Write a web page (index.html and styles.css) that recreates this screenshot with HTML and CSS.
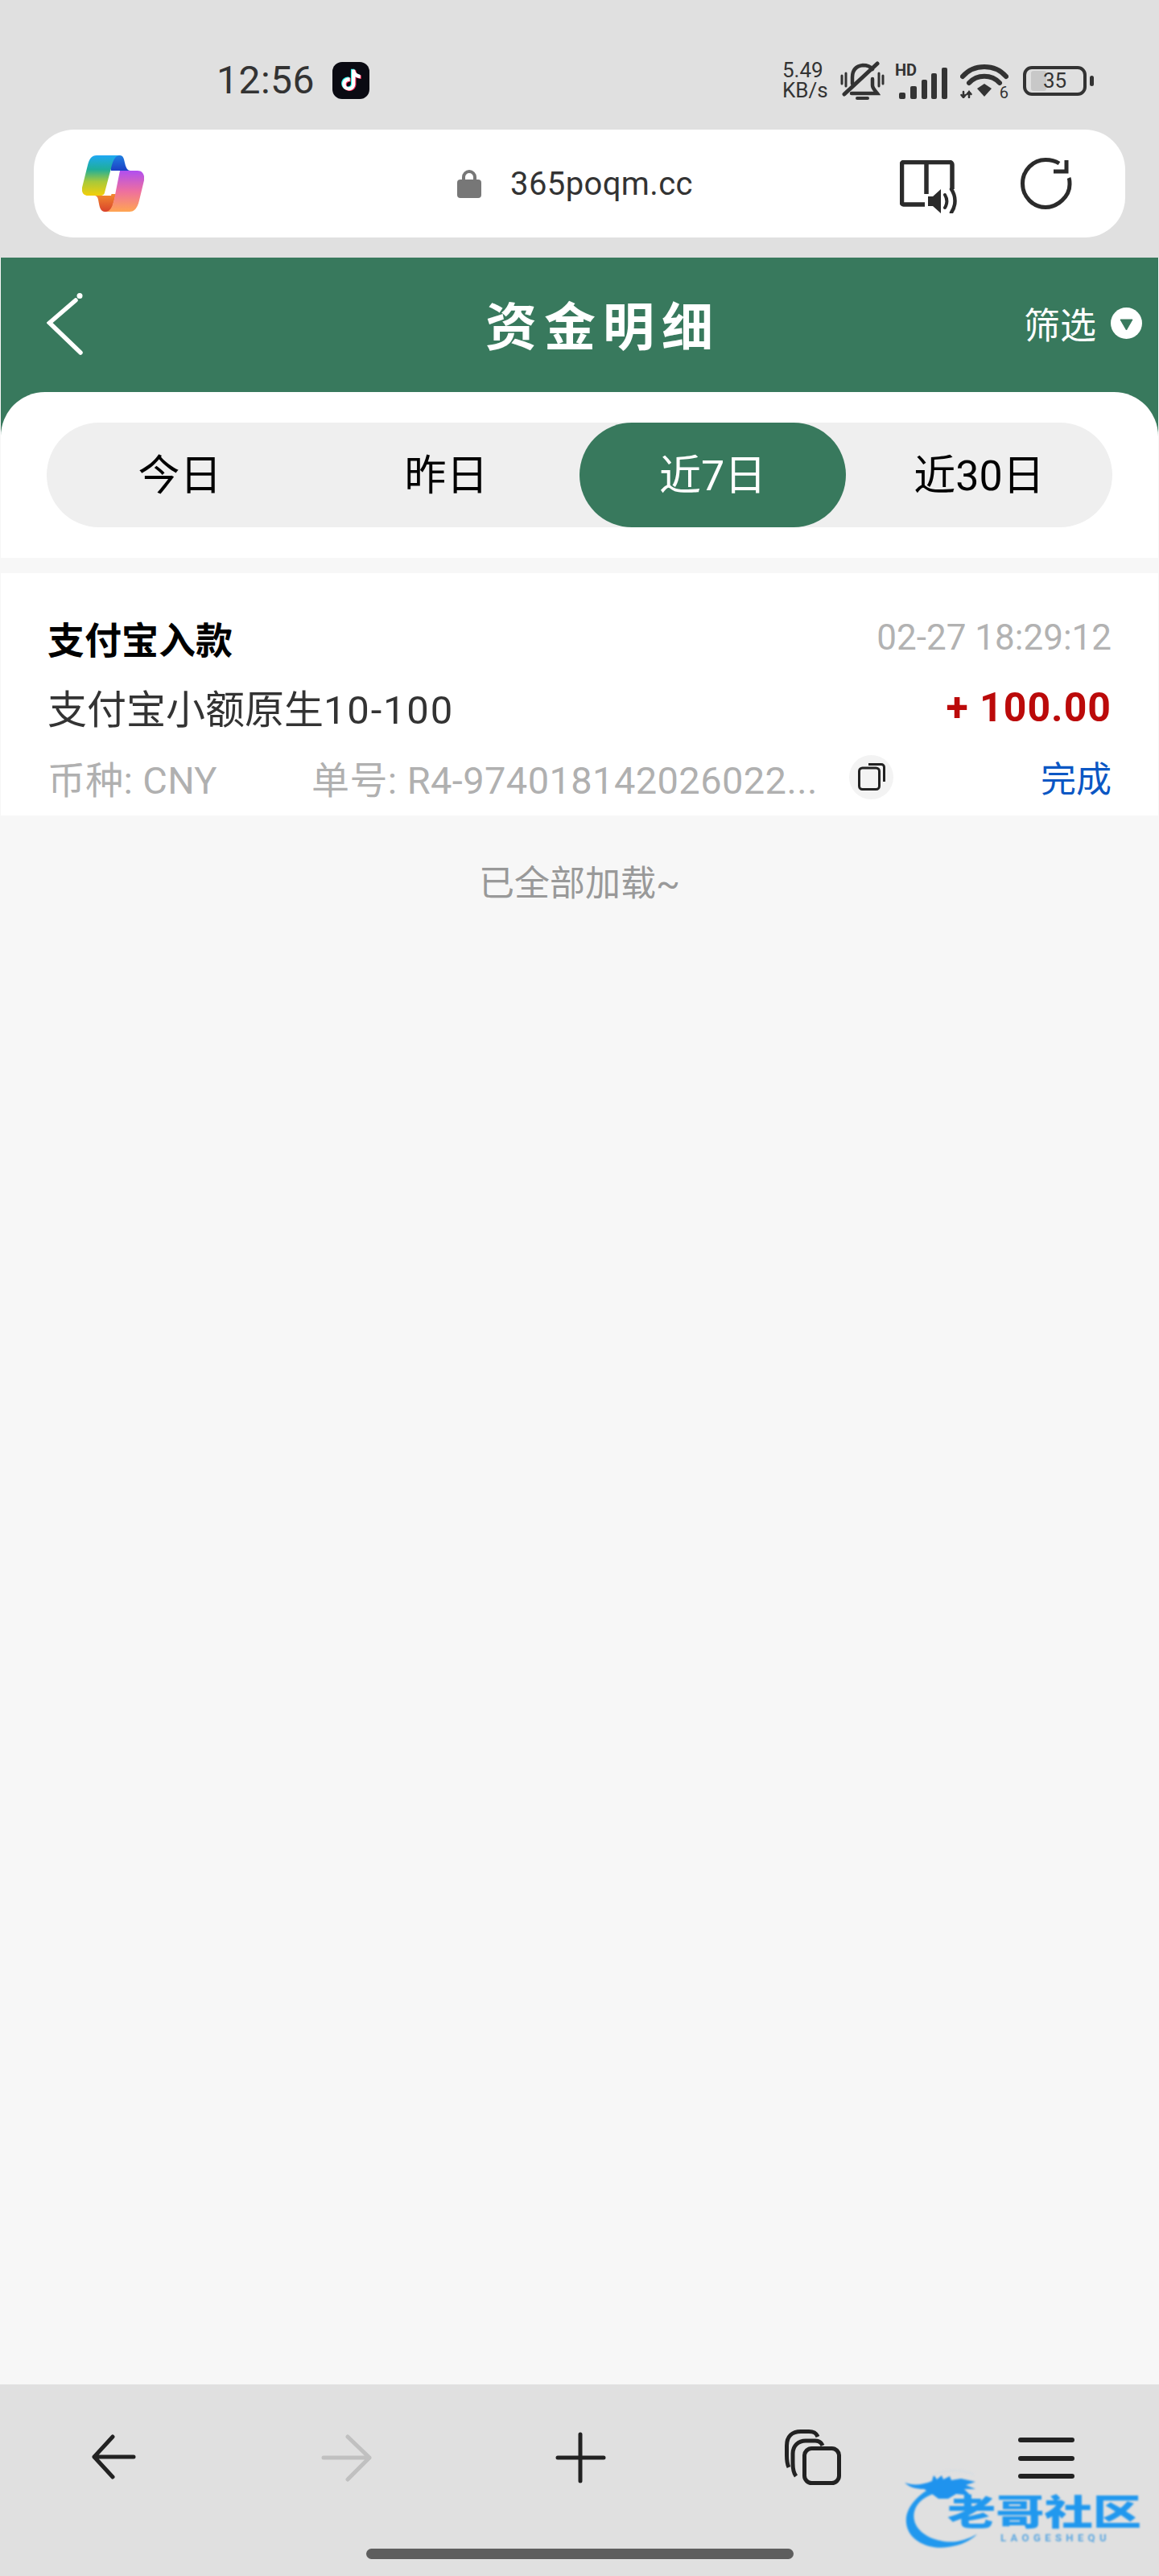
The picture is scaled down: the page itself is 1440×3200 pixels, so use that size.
FILE: index.html
```html
<!DOCTYPE html>
<html lang="zh-Hans">
<head>
    <meta charset="UTF-8">
    <meta name="viewport" content="width=device-width, initial-scale=1.0">
    <title>资金明细</title>
    <link rel="stylesheet" href="styles.css">
</head>
<body>
<div class="page">
    <div class="topbar">
        <div class="status">
            <span class="time">12:56</span>
            <svg class="tiktok" viewBox="0 0 46 46" width="46" height="46">
                <rect width="46" height="46" rx="12" fill="#0a0a12"/>
                <g transform="translate(10.5 9.5) scale(1.08)">
                    <path fill="#25f4ee" transform="translate(-1 -.6)" d="M12.525.02c1.31-.02 2.61-.01 3.91-.02.08 1.53.63 3.09 1.75 4.17 1.12 1.11 2.7 1.62 4.24 1.79v4.03c-1.44-.05-2.89-.35-4.2-.97-.57-.26-1.1-.59-1.62-.93-.01 2.92.01 5.84-.02 8.75-.08 1.4-.54 2.79-1.35 3.94-1.31 1.92-3.58 3.17-5.91 3.21-1.43.08-2.86-.31-4.08-1.03-2.02-1.19-3.44-3.37-3.65-5.71-.02-.5-.03-1-.01-1.49.18-1.9 1.12-3.72 2.58-4.96 1.66-1.44 3.98-2.13 6.15-1.72.02 1.48-.04 2.96-.04 4.44-.99-.32-2.15-.23-3.02.37-.63.41-1.11 1.04-1.36 1.75-.21.51-.15 1.07-.14 1.61.24 1.64 1.82 3.02 3.5 2.87 1.12-.01 2.19-.66 2.77-1.61.19-.33.4-.67.41-1.06.1-1.79.06-3.57.07-5.36.01-4.03-.01-8.05.02-12.07z"/>
                    <path fill="#fe2c55" transform="translate(1 .6)" d="M12.525.02c1.31-.02 2.61-.01 3.91-.02.08 1.53.63 3.09 1.75 4.17 1.12 1.11 2.7 1.62 4.24 1.79v4.03c-1.44-.05-2.89-.35-4.2-.97-.57-.26-1.1-.59-1.62-.93-.01 2.92.01 5.84-.02 8.75-.08 1.4-.54 2.79-1.35 3.94-1.31 1.92-3.58 3.17-5.91 3.21-1.43.08-2.86-.31-4.08-1.03-2.02-1.19-3.44-3.37-3.65-5.71-.02-.5-.03-1-.01-1.49.18-1.9 1.12-3.72 2.58-4.96 1.66-1.44 3.98-2.13 6.15-1.72.02 1.48-.04 2.96-.04 4.44-.99-.32-2.15-.23-3.02.37-.63.41-1.11 1.04-1.36 1.75-.21.51-.15 1.07-.14 1.61.24 1.64 1.82 3.02 3.5 2.87 1.12-.01 2.19-.66 2.77-1.61.19-.33.4-.67.41-1.06.1-1.79.06-3.57.07-5.36.01-4.03-.01-8.05.02-12.07z"/>
                    <path fill="#fff" d="M12.525.02c1.31-.02 2.61-.01 3.91-.02.08 1.53.63 3.09 1.75 4.17 1.12 1.11 2.7 1.62 4.24 1.79v4.03c-1.44-.05-2.89-.35-4.2-.97-.57-.26-1.1-.59-1.62-.93-.01 2.92.01 5.84-.02 8.75-.08 1.4-.54 2.79-1.35 3.94-1.31 1.92-3.58 3.17-5.91 3.21-1.43.08-2.86-.31-4.08-1.03-2.02-1.19-3.44-3.37-3.65-5.71-.02-.5-.03-1-.01-1.49.18-1.9 1.12-3.72 2.58-4.96 1.66-1.44 3.98-2.13 6.15-1.72.02 1.48-.04 2.96-.04 4.44-.99-.32-2.15-.23-3.02.37-.63.41-1.11 1.04-1.36 1.75-.21.51-.15 1.07-.14 1.61.24 1.64 1.82 3.02 3.5 2.87 1.12-.01 2.19-.66 2.77-1.61.19-.33.4-.67.41-1.06.1-1.79.06-3.57.07-5.36.01-4.03-.01-8.05.02-12.07z"/>
                </g>
            </svg>
            <div class="status-right">
                <div class="speed">5.49<br>KB/s</div>
                <svg class="bell" viewBox="0 0 55 48" width="55" height="48" fill="none" stroke="#333" stroke-width="4.5" stroke-linecap="round">
                    <path d="M2 18v10M7 15v16M48 15v16M53 18v10" stroke-width="3"/>
                    <path d="M15 28V20C15 10 20 6 28 5c5 0 9 1 12 5"/>
                    <path d="M40 22v8c0 4 4 7 6 10H14"/>
                    <path d="M5 41L46 3" stroke-width="5"/>
                    <path d="M21 46h13" stroke-width="4"/>
                </svg>
                <div class="signal">
                    <span class="hd">HD</span>
                    <svg viewBox="0 0 63 40" width="63" height="40" fill="#333">
                        <rect x="3" y="31" width="8" height="8" rx="2"/>
                        <rect x="17" y="23" width="8" height="16" rx="2"/>
                        <rect x="31" y="15" width="7" height="24" rx="2"/>
                        <rect x="43" y="7" width="7" height="32" rx="2"/>
                        <rect x="56" y="0" width="7" height="39" rx="2"/>
                    </svg>
                </div>
                <div class="wifi">
                    <svg viewBox="0 0 60 44" width="60" height="44" fill="none" stroke="#333" stroke-linecap="round">
                        <path d="M3 17C17 1 43 1 57 17" stroke-width="6"/>
                        <path d="M11 25C21 14 39 14 49 25" stroke-width="6"/>
                        <path fill="#333" stroke="none" d="M30 26l9 6-9 10-9-10z"/>
                        <path d="M4 36v7M1.500 40l2.500 3 2.500-3M11 43v-7M8.500 39l2.500-3 2.500 3" stroke-width="2.500"/>
                    </svg>
                    <span class="wifi-num">6</span>
                </div>
                <div class="battery-wrap">
                    <div class="battery">
                        <span class="battery-fill"></span>
                        <span class="battery-num">35</span>
                    </div>
                    <span class="battery-tip"></span>
                </div>
            </div>
        </div>
        <div class="urlbar">
            <svg class="copilot" viewBox="0 0 77 70" width="77" height="70">
                <defs>
                    <linearGradient id="cpLeft" x1="0" y1="0" x2="0" y2="1">
                        <stop offset="0" stop-color="#1ea8f4"/>
                        <stop offset=".35" stop-color="#1fae9a"/>
                        <stop offset=".65" stop-color="#a7c93a"/>
                        <stop offset="1" stop-color="#f4cf0a"/>
                    </linearGradient>
                    <linearGradient id="cpRight" x1="0" y1="0" x2="0" y2="1">
                        <stop offset="0" stop-color="#b04ff0"/>
                        <stop offset=".5" stop-color="#ee6f9f"/>
                        <stop offset="1" stop-color="#ffa552"/>
                    </linearGradient>
                    <linearGradient id="cpFold" x1="0" y1="0" x2="0" y2="1">
                        <stop offset="0" stop-color="#1f7fe0"/>
                        <stop offset="1" stop-color="#1c3fc4"/>
                    </linearGradient>
                    <linearGradient id="cpFoldB" x1="0" y1="0" x2="0" y2="1">
                        <stop offset="0" stop-color="#f28a2e"/>
                        <stop offset="1" stop-color="#d9432c"/>
                    </linearGradient>
                </defs>
                <path fill="url(#cpFold)" d="M30 0H47C51 0 52 4 53 9C54 14 56 19 60 19H36Z"/>
                <path fill="url(#cpFoldB)" d="M18 48H42L36 70H28C24 70 22 66 21 60C20 55 20 51 16 50Z"/>
                <path fill="url(#cpLeft)" d="M18 0H46C40 1 38 8 36 16L27 50H7C2 50 -1 46 0 40L7 12C9 4 12 0 18 0Z"/>
                <path fill="url(#cpRight)" d="M47 19H69C75 19 78 24 77 31L71 56C69 65 65 70 59 70H30C36 69 38 62 40 54Z"/>
                <path fill="#fff" d="M37 20H47C44 21 43 24 42 28L36 50H24C28 49 30 45 31 41L34 27C35 23 36 21 37 20Z"/>
            </svg>
            <svg class="lock" viewBox="0 0 30 35" width="30" height="35">
                <path d="M8 14V9a7 7 0 0 1 14 0v5" fill="none" stroke="#777" stroke-width="4"/>
                <rect y="12" width="30" height="23" rx="4" fill="#777"/>
            </svg>
            <span class="host">365poqm.cc</span>
            <svg class="reader" viewBox="0 0 74 66" width="74" height="66" fill="none" stroke="#2b2b2b" stroke-width="5.500">
                <path d="M31 55H4.500a2 2 0 0 1-2-2V4.500a2 2 0 0 1 2-2H62a3 3 0 0 1 3 3V36"/>
                <path d="M33 2.500V42"/>
                <path fill="#2b2b2b" stroke="none" d="M35 45h6l10-9v30l-10-9h-6z"/>
                <path d="M56 43c3 5 3 11 0 16" stroke-width="4" stroke-linecap="round"/>
                <path d="M64 36c6 9 6 20 0 29" stroke-width="4.500" stroke-linecap="round"/>
            </svg>
            <svg class="reload" viewBox="0 0 64 64" width="64" height="64" fill="none" stroke="#2b2b2b" stroke-width="5">
                <path d="M48 7C41 2.500 36 2.500 31 2.500 16 2.500 2.500 15 2.500 32S16 61.500 31 61.500 61 48 61 33c0-3 0-6-1-8"/>
                <path d="M57 3V17H41"/>
            </svg>
        </div>
    </div>

    <div class="main">
        <div class="header">
            <div class="header-row">
                <svg class="back" viewBox="0 0 46 80" width="46" height="80" fill="none" stroke="#fff" stroke-width="5.500" stroke-linecap="round">
                    <path d="M36 9L3.500 37L42 74"/>
                    <circle cx="41" cy="3.500" r="3.500" fill="#fff" stroke="none"/>
                </svg>
                <h1 class="title">资金明细</h1>
                <div class="filter">
                    <span>筛选</span>
                    <svg viewBox="0 0 39 39" width="39" height="39">
                        <circle cx="19.500" cy="19.500" r="19.500" fill="#fff"/>
                        <path d="M12 15h15l-7.500 13z" fill="#38795d" stroke="#38795d" stroke-width="1" stroke-linejoin="round"/>
                    </svg>
                </div>
            </div>
            <div class="panel">
                <div class="tabs">
                    <div class="tab">今日</div>
                    <div class="tab">昨日</div>
                    <div class="tab active">近7日</div>
                    <div class="tab">近30日</div>
                </div>
            </div>
        </div>

        <div class="card">
            <div class="row">
                <span class="type">支付宝入款</span>
                <span class="date">02-27 18:29:12</span>
            </div>
            <div class="row">
                <span class="channel">支付宝小额原生<span class="nums">10-100</span></span>
                <span class="amount">+ 100.00</span>
            </div>
            <div class="row">
                <span class="currency">币种: CNY</span>
                <span class="order">单号: R4-974018142026022...</span>
                <span class="copy">
                    <svg viewBox="0 0 34 34" width="34" height="34" fill="none" stroke="#222" stroke-width="3">
                        <rect x="1.500" y="6" width="25" height="26.500" rx="4"/>
                        <path d="M13 1.500H29a3.500 3.500 0 0 1 3.500 3.500V23"/>
                    </svg>
                </span>
                <span class="state">完成</span>
            </div>
        </div>

        <div class="end">已全部加载~</div>
    </div>

    <div class="bottombar">
        <div class="nav">
            <svg viewBox="0 0 70 70" width="70" height="70" fill="none" stroke="#222" stroke-width="5" stroke-linecap="round" stroke-linejoin="round">
                <path d="M60 34H11M34 9L11 34L34 59"/>
            </svg>
            <svg viewBox="0 0 70 70" width="70" height="70" fill="none" stroke="#c0c0c0" stroke-width="5" stroke-linecap="round" stroke-linejoin="round">
                <path d="M6 35H63M36 9L63 35L36 62"/>
            </svg>
            <svg viewBox="0 0 70 70" width="70" height="70" fill="none" stroke="#222" stroke-width="5" stroke-linecap="round">
                <path d="M7 35H64M35 6V64"/>
            </svg>
            <svg viewBox="0 0 70 70" width="70" height="70" fill="none" stroke="#222" stroke-width="5">
                <rect x="24.500" y="23.500" width="43" height="43" rx="9"/>
                <path d="M14 58C11 54 10 50 10 42V30C10 20 17 14 26 14H38C42 14 45 15 47 20"/>
                <path d="M5 47C3 43 2.500 38 2.500 32V20C2.500 9 9 2.500 20 2.500H30C36 2.500 39 4 41 9"/>
            </svg>
            <svg viewBox="0 0 70 70" width="70" height="70" fill="none" stroke="#222" stroke-width="6" stroke-linecap="round">
                <path d="M3 13H67M3 36H67M3 58H67"/>
            </svg>
        </div>
        <div class="homebar"></div>
    </div>

    <div class="watermark">
        <svg viewBox="0 0 120 100" width="120" height="100" fill="none">
            <path d="M40 20C18 30 2 48 4 66C6 88 32 100 56 96C72 94 84 88 92 80C78 88 62 92 46 88C26 84 10 70 14 52C17 40 28 32 44 28Z" fill="#2198ee"/>
            <path d="M2 16C12 20 24 19 36 14L38 6L42 12L48 7L50 12L58 8L60 13L72 11L90 15L78 19L90 24L76 24L84 32L66 30L56 36L44 36L36 30L26 24C16 24 8 22 2 16Z" fill="#1f93ee"/>
            <path d="M36 8C50 0 70 -2 88 6" stroke="#d7dde2" stroke-width="2"/>
        </svg>
        <div class="wm-name">老哥社区</div>
        <div class="wm-sub">LAOGESHEQU</div>
    </div>
</div>
</body>
</html>
```

FILE: styles.css
```css
* {
    box-sizing: border-box;
}
body {
    margin: 0;
    font-family: Roboto, "Noto Sans CJK SC", sans-serif;
    background-color: #e0e0e0;
    overflow: hidden;
}
.page {
    position: relative;
    width: 1440px;
    height: 3200px;
    display: flex;
    flex-direction: column;
    overflow: hidden;
}
svg {
    display: block;
    flex: none;
}

/* phone status + browser url bar */
.topbar {
    height: 320px;
    padding-top: 76px;
    background-color: #e0e0e0;
}
.status {
    display: flex;
    align-items: center;
    height: 48px;
    padding: 0 81px 0 269px;
    color: #333;
}
.time {
    font-size: 48px;
    font-weight: 400;
    letter-spacing: 0.5px;
    line-height: 48px;
}
.tiktok {
    margin-left: 22px;
}
.status-right {
    display: flex;
    align-items: center;
    margin-left: auto;
}
.speed {
    width: 58px;
    font-size: 26px;
    line-height: 25px;
    margin-right: 14px;
}
.bell {
    margin-right: 15px;
}
.signal {
    position: relative;
    width: 63px;
    height: 44px;
    padding-top: 6px;
    margin-right: 16px;
}
.hd {
    position: absolute;
    left: -2px;
    top: 2px;
    font-size: 20px;
    font-weight: 700;
    line-height: 15px;
}
.wifi {
    position: relative;
    width: 60px;
    margin-right: 18px;
}
.wifi-num {
    position: absolute;
    right: 0;
    bottom: -2px;
    font-size: 20px;
    line-height: 18px;
    background-color: #e0e0e0;
}
.battery-wrap {
    display: flex;
    align-items: center;
    gap: 4px;
}
.battery {
    position: relative;
    width: 79px;
    height: 37px;
    border: 4px solid #333;
    border-radius: 11px;
    text-align: center;
}
.battery-fill {
    position: absolute;
    left: 6px;
    top: 2px;
    bottom: 2px;
    width: 19px;
    border-radius: 3px;
    background-color: #c8c8c8;
}
.battery-num {
    position: relative;
    font-size: 26px;
    line-height: 29px;
}
.battery-tip {
    width: 5px;
    height: 13px;
    border-radius: 3px;
    background-color: #333;
}
.urlbar {
    display: flex;
    align-items: center;
    height: 134px;
    margin: 37px 42px 0;
    padding: 0 66px 0 60px;
    border-radius: 50px;
    background-color: #fff;
}
.lock {
    margin-left: 389px;
}
.host {
    margin-left: 36px;
    font-size: 40px;
    letter-spacing: 0.4px;
    color: #333;
}
.reader {
    margin-left: auto;
    margin-top: 8px;
}
.reload {
    margin-left: 76px;
}

/* page */
.main {
    flex: 1;
    padding: 0 1px;
    background-color: #f7f7f7;
}
.header {
    background-color: #38795d;
}
.header-row {
    display: flex;
    align-items: center;
    height: 167px;
    padding: 0 20px 0 57px;
}
.title {
    margin: 0 0 6px 499px;
    font-size: 64px;
    font-weight: 700;
    letter-spacing: 9px;
    color: #fff;
}
.filter {
    display: flex;
    align-items: center;
    gap: 18px;
    margin: 0 0 4px auto;
    font-size: 45px;
    color: #fff;
}
.panel {
    height: 206px;
    padding: 38px 57px;
    border-radius: 55px 55px 0 0;
    background-color: #fff;
}
.tabs {
    display: grid;
    grid-template-columns: repeat(4, 1fr);
    grid-template-rows: 130px;
    height: 130px;
    border-radius: 65px;
    background-color: #efefef;
}
.tab {
    font-size: 52px;
    height: 130px;
    line-height: 134px;
    text-align: center;
    color: #000;
}
.tab.active {
    border-radius: 65px;
    background-color: #38795d;
    color: #fff;
}
.card {
    margin-top: 19px;
    height: 301px;
    padding: 38px 58px 0 58px;
    background-color: #fff;
}
.row {
    display: flex;
    align-items: center;
    height: 86px;
}
.type {
    margin-bottom: 3px;
    font-size: 46px;
    font-weight: 700;
    color: #000;
}
.date {
    margin: 0 0 3px auto;
    font-family: "Liberation Sans Narrow", Roboto, sans-serif;
    font-size: 44px;
    color: #b2b2b2;
}
.channel {
    margin-bottom: 4px;
    font-size: 49px;
    color: #333;
}
.nums {
    letter-spacing: 1.8px;
}
.amount {
    margin-left: auto;
    font-size: 50px;
    font-weight: 700;
    letter-spacing: 1px;
    color: #bb0a0a;
}
.currency {
    width: 328px;
    font-size: 47px;
    letter-spacing: 0.3px;
    color: #b0b0b0;
}
.order {
    width: 668px;
    font-size: 47px;
    letter-spacing: 0.4px;
    color: #b0b0b0;
    white-space: nowrap;
}
.copy {
    display: flex;
    align-items: center;
    justify-content: center;
    width: 55px;
    height: 55px;
    border-radius: 50%;
    background-color: #f3f3f3;
}
.state {
    margin-left: auto;
    font-size: 44px;
    color: #0b57c4;
}
.end {
    margin-top: 62px;
    font-size: 44px;
    line-height: 46px;
    text-align: center;
    color: #999;
}

/* browser toolbar */
.bottombar {
    height: 238px;
    padding-top: 56px;
    background-color: #e0e0e0;
}
.nav {
    display: flex;
    justify-content: space-between;
    padding: 0 105px 0 106px;
}
.homebar {
    width: 531px;
    height: 13px;
    margin: 78px auto 0;
    border-radius: 7px;
    background-color: #5e5e5e;
}

/* forum watermark over the toolbar */
.watermark {
    position: absolute;
    left: 1122px;
    top: 3068px;
    width: 300px;
    height: 100px;
    filter: blur(0.8px);
}
.wm-name {
    position: absolute;
    left: 55px;
    top: 32px;
    font-size: 44px;
    font-weight: 900;
    line-height: 44px;
    white-space: nowrap;
    color: #2198ee;
    transform: scaleX(1.37);
    transform-origin: left center;
}
.wm-sub {
    position: absolute;
    left: 121px;
    top: 78px;
    font-size: 13px;
    font-weight: 700;
    letter-spacing: 5.4px;
    line-height: 13px;
    color: #5aa6e0;
}
```
